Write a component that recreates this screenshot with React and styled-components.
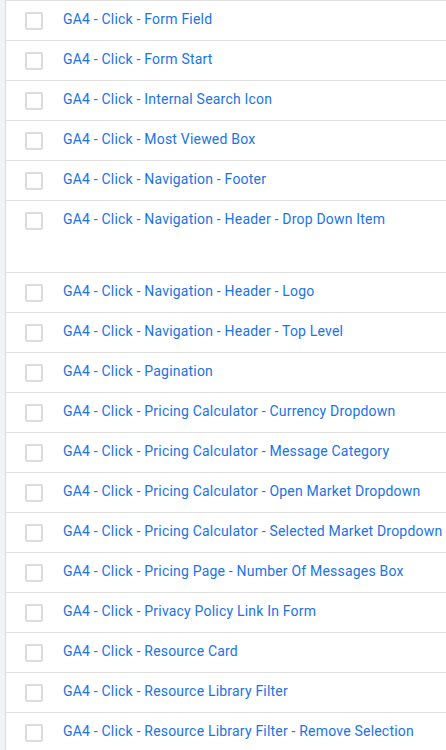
import React from 'react';
import styled, { createGlobalStyle } from 'styled-components';

const GlobalStyle = createGlobalStyle`
  html, body {
    margin: 0;
    padding: 0;
    background: #ffffff;
    font-family: Roboto, "Noto Sans", Arial, sans-serif;
  }
`;

const tags = [
  'GA4 - Click - Form Field',
  'GA4 - Click - Form Start',
  'GA4 - Click - Internal Search Icon',
  'GA4 - Click - Most Viewed Box',
  'GA4 - Click - Navigation - Footer',
  { name: 'GA4 - Click - Navigation - Header - Drop Down Item', tall: true },
  'GA4 - Click - Navigation - Header - Logo',
  'GA4 - Click - Navigation - Header - Top Level',
  'GA4 - Click - Pagination',
  'GA4 - Click - Pricing Calculator - Currency Dropdown',
  'GA4 - Click - Pricing Calculator - Message Category',
  'GA4 - Click - Pricing Calculator - Open Market Dropdown',
  'GA4 - Click - Pricing Calculator - Selected Market Dropdown',
  'GA4 - Click - Pricing Page - Number Of Messages Box',
  'GA4 - Click - Privacy Policy Link In Form',
  'GA4 - Click - Resource Card',
  'GA4 - Click - Resource Library Filter',
  'GA4 - Click - Resource Library Filter - Remove Selection',
];

const App = () => {
  return (
    <>
      <GlobalStyle />
      <Page>
        <Gutter />
        <Table>
          {tags.map((tag, index) => {
            const name = typeof tag === 'string' ? tag : tag.name;
            const tall = typeof tag !== 'string' && tag.tall;
            return (
              <Row key={index} $tall={tall}>
                <CheckCell>
                  <Checkbox type="button" aria-label={`Select ${name}`} />
                </CheckCell>
                <NameLink href="#">{name}</NameLink>
              </Row>
            );
          })}
        </Table>
      </Page>
    </>
  );
};

export default App;

const Page = styled.div`
  display: flex;
  width: 446px;
  height: 750px;
  overflow: hidden;
`;

const Gutter = styled.div`
  width: 5px;
  flex-shrink: 0;
  background: #f1f3f4;
  border-right: 1px solid #dadce0;
`;

const Table = styled.div`
  flex: 1;
  display: flex;
  flex-direction: column;
  border-top: 1px solid #e0e0e0;
`;

const Row = styled.div`
  display: flex;
  align-items: flex-start;
  box-sizing: border-box;
  height: ${({ $tall }) => ($tall ? '72px' : '40px')};
  flex-shrink: 0;
  border-bottom: 1px solid #e0e0e0;
  white-space: nowrap;
`;

const CheckCell = styled.div`
  width: 57px;
  flex-shrink: 0;
  display: flex;
  padding-top: 11px;
  padding-left: 19px;
  box-sizing: border-box;
`;

const Checkbox = styled.button`
  width: 18px;
  height: 18px;
  padding: 0;
  margin: 0;
  background: #fff;
  border: 2px solid #dadce0;
  border-radius: 2px;
  box-sizing: border-box;
  cursor: pointer;
`;

const NameLink = styled.a`
  font-size: 14px;
  line-height: 20px;
  padding-top: 8px;
  color: #1a73e8;
  text-decoration: none;
  letter-spacing: 0.2px;
`;
